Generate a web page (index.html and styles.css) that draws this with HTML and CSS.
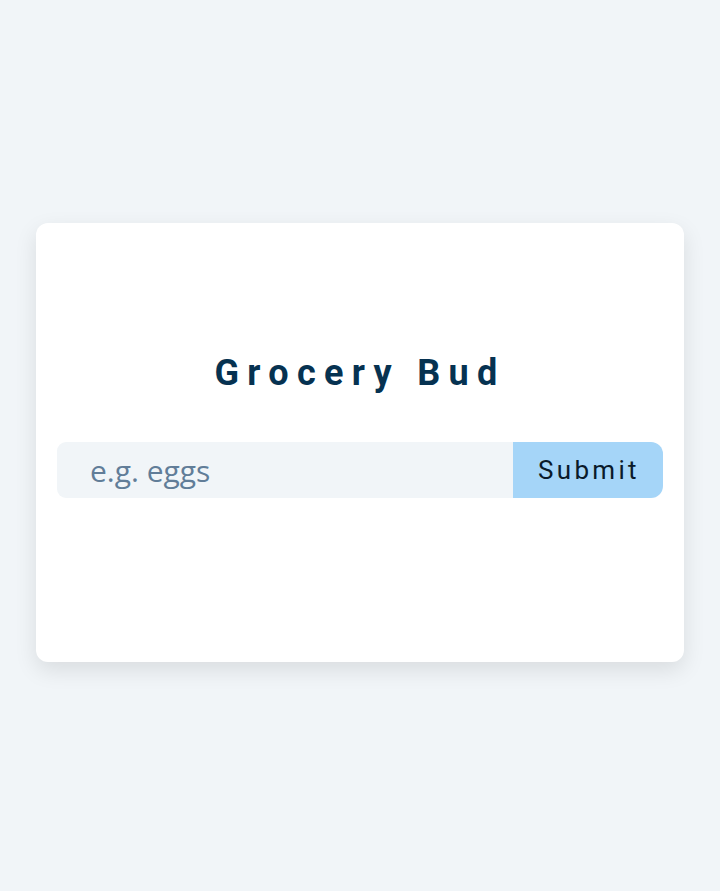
FILE: index.html
```html
<!DOCTYPE html>
<html>
<head>
<meta charset="utf-8">
<link rel="stylesheet" href="styles.css">
</head>
<body>
<main class="page">
  <section class="card">
    <h3 class="title">Grocery Bud</h3>
    <form class="form">
      <input class="input" type="text" placeholder="e.g. eggs">
      <button class="btn" type="button">Submit</button>
    </form>
  </section>
</main>
</body>
</html>
```
FILE: styles.css
```css
* { box-sizing: border-box; }
html, body { margin: 0; padding: 0; }
body {
  background: #f1f5f8;
  font-family: "Open Sans", sans-serif;
  width: 720px;
  height: 891px;
}
.page {
  padding-top: 223px;
  display: flex;
  justify-content: center;
}
.card {
  width: 648px;
  height: 439px;
  background: #fff;
  border-radius: 12px;
  box-shadow: 0 8px 22px rgba(0,0,0,0.1);
  padding: 128px 21px 0;
  display: flex;
  flex-direction: column;
  align-items: stretch;
}
.title {
  margin: 0 0 46px;
  text-align: center;
  font-family: Roboto, sans-serif;
  font-weight: 700;
  font-size: 36px;
  line-height: 1.25;
  letter-spacing: 8.3px;
  color: #063251;
  padding-left: 0;
}
.form {
  display: flex;
  margin: 0;
}
.input {
  flex: 1;
  height: 56px;
  border: none;
  background: #f1f5f8;
  border-top-left-radius: 9px;
  border-bottom-left-radius: 9px;
  padding: 0 0 0 33px;
  font-family: "Open Sans", sans-serif;
  font-size: 30px;
  color: #617d98;
  outline: none;
}
.input::placeholder { color: #617d98; }
.btn {
  width: 150px;
  height: 56px;
  border: none;
  background: #a5d5f8;
  border-top-right-radius: 12px;
  border-bottom-right-radius: 12px;
  font-family: Roboto, sans-serif;
  font-size: 26px;
  letter-spacing: 3.3px;
  color: #0a1a2a;
  padding: 0 0 0 2px;
}
```
